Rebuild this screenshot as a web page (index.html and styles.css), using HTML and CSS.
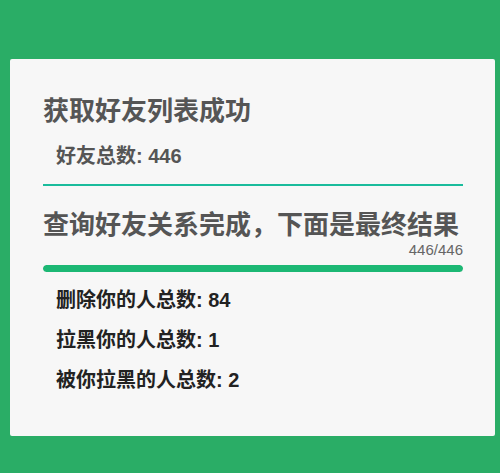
FILE: index.html
```html
<!DOCTYPE html>
<html lang="zh">
<head>
<meta charset="utf-8">
<link rel="stylesheet" href="styles.css">
</head>
<body>
<div class="card">
  <h2 class="title">获取好友列表成功</h2>
  <p class="sub">好友总数: 446</p>
  <hr class="divider">
  <h2 class="title title2">查询好友关系完成，下面是最终结果</h2>
  <div class="count">446/446</div>
  <div class="bar"><div class="fill" style="width:100%"></div></div>
  <p class="item first">删除你的人总数: 84</p>
  <p class="item">拉黑你的人总数: 1</p>
  <p class="item">被你拉黑的人总数: 2</p>
</div>
</body>
</html>
```
FILE: styles.css
```css
html, body {
  margin: 0;
  padding: 0;
  background: #2aad66;
  height: 100%;
}
body {
  padding: 59px 5px 0 10px;
  box-sizing: border-box;
  font-family: "Helvetica Neue", "Liberation Sans", "Noto Sans CJK SC", sans-serif;
}
.card {
  background: #f7f7f7;
  height: 377px;
  box-sizing: border-box;
  padding: 35px 32px 0 33px;
  border-radius: 2px;
  display: flex;
  flex-direction: column;
}
.title {
  margin: 0;
  font-size: 26px;
  font-weight: bold;
  color: #555;
  line-height: 34px;
  white-space: nowrap;
}
.sub {
  margin: 15px 0 0 13px;
  font-size: 20px;
  font-weight: bold;
  color: #555;
  line-height: 26px;
}
.divider {
  margin: 15px 0 0 0;
  border: none;
  height: 2px;
  background: #1abc9c;
}
.title2 {
  margin-top: 22px;
}
.count {
  align-self: flex-end;
  font-size: 15px;
  color: #666;
  line-height: 16px;
}
.bar {
  margin-top: 7px;
  height: 7px;
  background: #e5e5e5;
  border-radius: 4px;
  overflow: hidden;
}
.fill {
  height: 100%;
  background: #1cb874;
  border-radius: 4px;
}
.item {
  margin: 0 0 0 13px;
  font-size: 20px;
  font-weight: bold;
  color: #222;
  line-height: 40px;
}
.item.first {
  margin-top: 8px;
}
```
